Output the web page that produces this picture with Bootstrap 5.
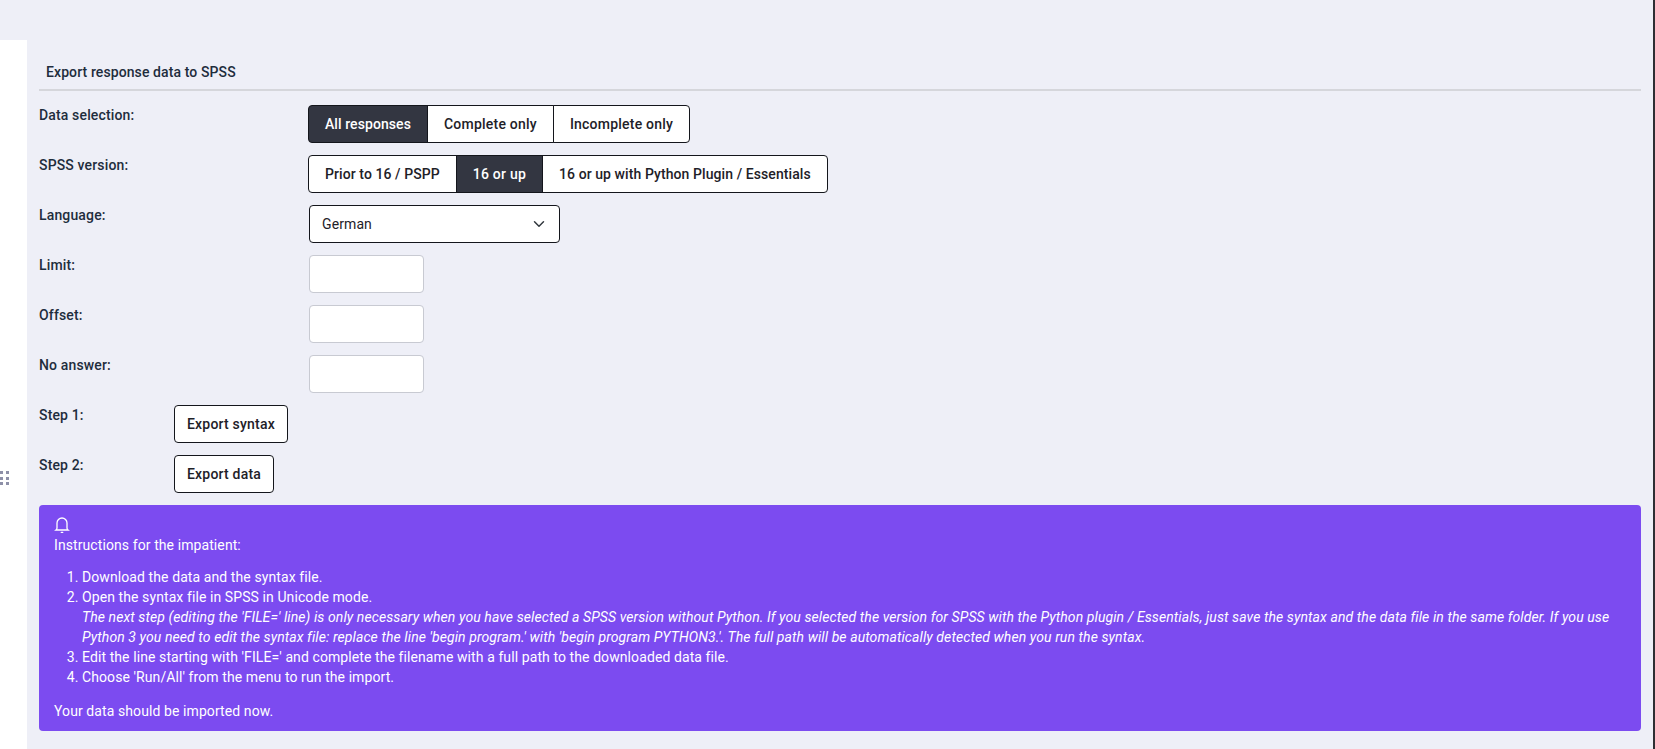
<!DOCTYPE html>
<html lang="en">
<head>
<meta charset="utf-8">
<title>Export response data to SPSS</title>
<link href="https://cdn.jsdelivr.net/npm/bootstrap@5.3.0/dist/css/bootstrap.min.css" rel="stylesheet">
<style>
html,body{height:100%;overflow:hidden}
body{background:#eeeff7;font-family:"Roboto","Liberation Sans",sans-serif;font-size:14px;color:#1e2d3d;line-height:20px}
.frame{display:flex;height:749px}
.edge{width:2px;flex:none;background:#2e2e33}
.shell{display:flex;flex:1;min-width:0;padding-top:40px}
.rail{width:27px;flex:none;background:#fff;position:relative}
.grip{position:absolute;left:0;top:431px;display:grid;grid-template-columns:repeat(2,3px);gap:2.5px}
.grip i{width:3px;height:3px;background:#8e90a8;display:block}
.pane{flex:1;min-width:0;padding:0 12px}
.pane-title{font-weight:500;letter-spacing:.1px;padding:22px 7px 7px;border-bottom:2px solid #d5d6db;margin-bottom:14px}
.frow{display:flex;height:38px;margin-bottom:12px}
.frow label{width:269px;flex:none;font-weight:500;letter-spacing:.15px;line-height:20px;height:20px}
.frow.step label{width:135px}
.btn.seg{--bs-btn-font-size:14px;--bs-btn-font-weight:500;--bs-btn-color:#1e2128;--bs-btn-bg:#fff;--bs-btn-border-color:#14161c;--bs-btn-hover-color:#1e2128;--bs-btn-hover-bg:#fff;--bs-btn-hover-border-color:#14161c;--bs-btn-active-bg:#333641;--bs-btn-active-color:#fff;--bs-btn-active-border-color:#14161c;--bs-btn-padding-x:16px;--bs-btn-padding-y:8px;--bs-btn-line-height:20px;--bs-btn-border-radius:4px;height:38px;letter-spacing:.08px}
.btn.seg.track{letter-spacing:.22px}
.frow.step .btn.seg{--bs-btn-padding-x:12px;letter-spacing:.2px}
.form-select.lang{width:251px;height:38px;font-size:14px;letter-spacing:.1px;color:#1e2128;border-color:#14161c;border-radius:4px;padding:8px 36px 8px 12px;margin-left:1px;line-height:20px}
.form-control.num{width:115px;height:38px;border-color:#c8cad2;border-radius:4px;margin-left:1px}
.note{background:#7c4bf0;color:#fff;border:0;border-radius:4px;padding:12px 15px 10px;margin:0;font-size:14px;line-height:20px;letter-spacing:.09px}
.note svg{display:block;margin-bottom:2px}
.note ol{margin:0 0 14px;padding-left:28px}
.note p{margin:0 0 12px}
.note p:last-child{margin:0}
</style>
</head>
<body>
<div class="frame">
<div class="shell">
  <div class="rail"><div class="grip"><i></i><i></i><i></i><i></i><i></i><i></i></div></div>
  <main class="pane">
    <div class="pane-title">Export response data to SPSS</div>
    <div class="frow"><label>Data selection:</label>
      <div class="btn-group"><button class="btn seg active">All responses</button><button class="btn seg track">Complete only</button><button class="btn seg track">Incomplete only</button></div></div>
    <div class="frow"><label>SPSS version:</label>
      <div class="btn-group"><button class="btn seg">Prior to 16 / PSPP</button><button class="btn seg track active">16 or up</button><button class="btn seg">16 or up with Python Plugin / Essentials</button></div></div>
    <div class="frow"><label>Language:</label><select class="form-select lang"><option>German</option></select></div>
    <div class="frow"><label>Limit:</label><input class="form-control num" type="text"></div>
    <div class="frow"><label>Offset:</label><input class="form-control num" type="text"></div>
    <div class="frow"><label>No answer:</label><input class="form-control num" type="text"></div>
    <div class="frow step"><label>Step 1:</label><button class="btn seg">Export syntax</button></div>
    <div class="frow step"><label>Step 2:</label><button class="btn seg">Export data</button></div>
    <div class="alert note">
      <svg width="16" height="16" viewBox="0 0 16 16" fill="none" stroke="#fff" stroke-width="1.3"><path d="M2 13h12c-.8-.6-1-1.200-1-2V6a5 5 0 0 0-10 0v5c0 .8-.2 1.400-1 2z"/><path d="M7.200 15.300h1.600" stroke-linecap="round"/></svg>
      <p>Instructions for the impatient:</p>
      <ol>
        <li>Download the data and the syntax file.</li>
        <li>Open the syntax file in SPSS in Unicode mode.<br><em>The next step (editing the 'FILE=' line) is only necessary when you have selected a SPSS version without Python. If you selected the version for SPSS with the Python plugin / Essentials, just save the syntax and the data file in the same folder. If you use Python 3 you need to edit the syntax file: replace the line 'begin program.' with 'begin program PYTHON3.'. The full path will be automatically detected when you run the syntax.</em></li>
        <li>Edit the line starting with 'FILE=' and complete the filename with a full path to the downloaded data file.</li>
        <li>Choose 'Run/All' from the menu to run the import.</li>
      </ol>
      <p>Your data should be imported now.</p>
    </div>
  </main>
</div>
<div class="edge"></div>
</div>
<script src="https://cdn.jsdelivr.net/npm/bootstrap@5.3.0/dist/js/bootstrap.bundle.min.js"></script>
</body>
</html>
